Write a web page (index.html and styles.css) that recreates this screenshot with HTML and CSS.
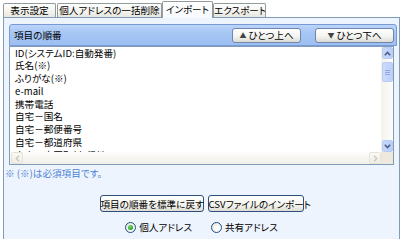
FILE: index.html
```html
<!DOCTYPE html>
<html lang="ja">
<head>
<meta charset="utf-8">
<link rel="stylesheet" href="styles.css">
</head>
<body>
<div class="tabs">
  <div class="tab t1">表示設定</div>
  <div class="tab t2">個人アドレスの一括削除</div>
  <div class="tab t3 active">インポート</div>
  <div class="tab t4">エクスポート</div>
</div>
<div class="panel">
  <div class="hdr">
    <span class="hdr-title">項目の順番</span>
    <div class="hdr-btns">
      <button class="hbtn up"><span class="tri">▲</span>ひとつ上へ</button>
      <button class="hbtn down"><span class="tri">▼</span>ひとつ下へ</button>
    </div>
  </div>
  <div class="listbox">
    <div class="items">
      <div class="item">ID(システムID:自動発番)</div>
      <div class="item">氏名(※)</div>
      <div class="item">ふりがな(※)</div>
      <div class="item">e-mail</div>
      <div class="item">携帯電話</div>
      <div class="item">自宅－国名</div>
      <div class="item">自宅－郵便番号</div>
      <div class="item">自宅－都道府県</div>
      <div class="item">自宅－市区町村・番地</div>
    </div>
    <div class="vscroll">
      <div class="sbtn vbtn"><svg width="7" height="5" viewBox="0 0 7 5"><path d="M0.8 4.2 L3.5 1.4 L6.2 4.2" fill="none" stroke="#4d6185" stroke-width="1.6"/></svg></div>
      <div class="vtrack">
        <div class="thumb"><span class="grip"></span><span class="grip"></span><span class="grip"></span></div>
      </div>
      <div class="sbtn vbtn"><svg width="7" height="5" viewBox="0 0 7 5"><path d="M0.8 0.8 L3.5 3.6 L6.2 0.8" fill="none" stroke="#4d6185" stroke-width="1.6"/></svg></div>
    </div>
    <div class="hscroll">
      <div class="hbtn-s"><svg width="5" height="7" viewBox="0 0 5 7"><path d="M4 0.8 L1.3 3.5 L4 6.2" fill="none" stroke="#c9c7ba" stroke-width="1.3"/></svg></div>
      <div class="htrack"></div>
      <div class="hbtn-s"><svg width="5" height="7" viewBox="0 0 5 7"><path d="M1 0.8 L3.7 3.5 L1 6.2" fill="none" stroke="#c9c7ba" stroke-width="1.3"/></svg></div>
    </div>
    <div class="corner"></div>
  </div>
  <div class="note">※ (※)は必須項目です。</div>
  <div class="actions">
    <button class="btn b1">項目の順番を標準に戻す</button>
    <button class="btn b2">CSVファイルのインポート</button>
  </div>
  <div class="radios">
    <label class="radio"><span class="rb checked"></span>個人アドレス</label>
    <label class="radio"><span class="rb"></span>共有アドレス</label>
  </div>
</div>
</body>
</html>
```
FILE: styles.css
```css
* { box-sizing: border-box; }
html, body { margin: 0; padding: 0; background: #ffffff; }
body {
  font-family: "Noto Sans CJK JP", "Liberation Sans", sans-serif;
  font-size: 9.6px;
  font-feature-settings: "palt" 1;
  color: #000;
  width: 400px;
  height: 239px;
  overflow: hidden;
}
.tabs {
  display: flex;
  align-items: flex-end;
  height: 17px;
  padding-left: 3px;
  position: relative;
  z-index: 2;
}
.tab {
  height: 14px;
  border: 1px solid #919b9c;
  border-bottom: 0;
  background: linear-gradient(#fefefe, #f1f0ea 70%, #e6e5df);
  line-height: 12px;
  text-align: center;
  white-space: nowrap;
  border-radius: 2px 2px 0 0;
  overflow: hidden;
}
.t1 { width: 53px; }
.t2 { width: 105px; margin-left: 1px; }
.t3 { width: 51px; }
.t4 { width: 53px; }
.tab.active {
  height: 17px;
  line-height: 14px;
  background: linear-gradient(#ffffff, #f6f9fe);
  margin-bottom: -1px;
}
.panel {
  margin-left: 3px;
  width: 397px;
  height: 230px;
  border: 1px solid #7f9db9;
  background: #eef4fd;
  padding-top: 6px;
}
.hdr {
  margin: 0 2px 0 5px;
  height: 22px;
  border: 1px solid #7a9ad6;
  border-radius: 3px 3px 0 0;
  background: linear-gradient(#bcd4f8, #a6c6f4 40%, #9dbff2);
  display: flex;
  align-items: center;
  justify-content: space-between;
  padding: 0 2px 0 4px;
}
.hdr-title { line-height: 12px; }
.hdr-btns { display: flex; gap: 14px; }
.hbtn {
  font: inherit;
  font-feature-settings: "palt" 1;
  height: 15px;
  padding: 0;
  border: 1px solid #6f87ae;
  border-radius: 3px;
  background: linear-gradient(#ffffff, #f3f3ee 60%, #dcdcd4);
  color: #000;
  line-height: 12px;
  display: flex;
  align-items: center;
  justify-content: center;
}
.hbtn.up { width: 69px; }
.hbtn.down { width: 79px; }
.tri { font-size: 7px; color: #444; margin-right: 2px; }
.listbox {
  margin: 0 5px 0 5px;
  height: 119px;
  border: 1px solid #7f9db9;
  background: #fff;
  display: grid;
  grid-template-columns: 1fr 12px;
  grid-template-rows: 1fr 12px;
}
.items {
  overflow: hidden;
  padding-left: 5px;
}
.item {
  height: 12.75px;
  line-height: 12.75px;
  white-space: nowrap;
}
.items .item:first-child { margin-top: -0.5px; }
.vscroll {
  display: flex;
  flex-direction: column;
  background: linear-gradient(90deg, #f4f2ec, #fdfdfb);
}
.sbtn {
  height: 12px;
  margin: 0 0 0 1px;
  border: 1px solid #b7cbf3;
  border-radius: 2px;
  background: linear-gradient(90deg, #c8d8fb, #b9cefa);
  display: flex;
  align-items: center;
  justify-content: center;
}
.vtrack { flex: 1; padding-top: 3px; }
.thumb {
  margin-left: 1px;
  height: 20px;
  border: 1px solid #b7cbf3;
  border-radius: 2px;
  background: linear-gradient(90deg, #cddbfc, #bdd0fa);
  display: flex;
  flex-direction: column;
  align-items: center;
  justify-content: center;
  gap: 1px;
}
.grip { width: 5px; height: 1px; background: #8fa9e0; }
.hscroll {
  display: flex;
  background: linear-gradient(#fdfdfb, #f1efe8);
  padding-left: 1px;
}
.hbtn-s {
  width: 12px;
  border: 1px solid #e6e4da;
  border-radius: 2px;
  background: linear-gradient(#f9f8f4, #efede6);
  display: flex;
  align-items: center;
  justify-content: center;
}
.htrack { flex: 1; }
.corner { background: #efe9dd; }
.note {
  margin: 2px 0 0 1px;
  line-height: 12px;
  color: #4d82d6;
}
.actions {
  display: flex;
  justify-content: center;
  gap: 4px;
  margin-top: 16px;
}
.btn {
  font: inherit;
  font-feature-settings: "palt" 1;
  height: 17px;
  padding: 0;
  border: 1px solid #2c4f7f;
  border-radius: 3px;
  background: linear-gradient(#ffffff, #f4f4ef 60%, #dedcd3);
  color: #000;
  line-height: 14px;
  white-space: nowrap;
}
.b1 { width: 104px; }
.b2 { width: 96px; }
.radios {
  display: flex;
  justify-content: center;
  gap: 19px;
  margin-top: 9px;
}
.radio {
  display: flex;
  align-items: center;
  gap: 3px;
  line-height: 12px;
}
.rb {
  width: 11px;
  height: 11px;
  border-radius: 50%;
  border: 1px solid #1c5180;
  background: radial-gradient(circle at 60% 60%, #ffffff 20%, #dcdcd5 100%);
  display: flex;
  align-items: center;
  justify-content: center;
}
.rb.checked::after {
  content: "";
  width: 5px;
  height: 5px;
  border-radius: 50%;
  background: radial-gradient(circle at 40% 35%, #7fdb6e, #22a021 70%);
}
```
